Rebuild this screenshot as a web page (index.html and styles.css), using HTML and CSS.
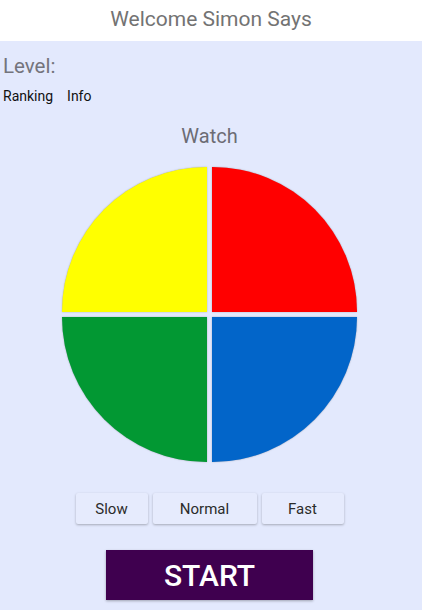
FILE: index.html
```html
<!DOCTYPE html>
<html lang="en">
<head>
<meta charset="utf-8">
<title>Welcome Simon Says</title>
<link rel="stylesheet" href="styles.css">
</head>
<body>
<header class="app-bar">Welcome Simon Says</header>
<main class="screen">
  <div class="level">Level:</div>
  <nav class="links">
    <span class="link">Ranking</span>
    <span class="link">Info</span>
  </nav>
  <div class="stage">
    <div class="status">Watch</div>
    <div class="board">
      <div class="pad pad-yellow"></div>
      <div class="pad pad-red"></div>
      <div class="pad pad-green"></div>
      <div class="pad pad-blue"></div>
    </div>
    <div class="speeds">
      <button class="speed speed-slow">Slow</button>
      <button class="speed speed-normal">Normal</button>
      <button class="speed speed-fast">Fast</button>
    </div>
    <button class="start">START</button>
  </div>
</main>
</body>
</html>
```

FILE: styles.css
```css
html, body {
  margin: 0;
  padding: 0;
}
body {
  width: 422px;
  height: 610px;
  overflow: hidden;
  background: #e3e9fd;
  font-family: Roboto, "Liberation Sans", sans-serif;
}
.app-bar {
  height: 41px;
  box-sizing: border-box;
  background: #ffffff;
  color: #737373;
  font-size: 21px;
  line-height: 39px;
  text-align: center;
  padding-bottom: 2px;
}
.screen {
  display: flex;
  flex-direction: column;
}
.level {
  padding: 13px 3px 0;
  font-size: 20.5px;
  line-height: 24px;
  color: #74747c;
}
.links {
  display: flex;
  gap: 14px;
  padding: 0 3px;
  margin-top: 8px;
  font-size: 14px;
  line-height: 20px;
  color: #111111;
}
.stage {
  display: flex;
  flex-direction: column;
  align-items: center;
  padding-right: 3px;
}
.status {
  margin-top: 18px;
  font-size: 20px;
  line-height: 24px;
  color: #6c6c74;
}
.board {
  margin-top: 19px;
  display: grid;
  grid-template-columns: 144.5px 144.5px;
  grid-template-rows: 144.5px 145px;
  gap: 5.5px;
}
.pad {
  box-shadow: 0 0 1.5px rgba(0, 0, 0, 0.35);
}
.pad-yellow {
  background: #ffff00;
  border-top-left-radius: 100% 100%;
}
.pad-red {
  background: #ff0000;
  border-top-right-radius: 100% 100%;
}
.pad-green {
  background: #029833;
  border-bottom-left-radius: 100% 100%;
}
.pad-blue {
  background: #0265c9;
  border-bottom-right-radius: 100% 100%;
}
.speeds {
  margin-top: 31px;
  display: flex;
  gap: 5px;
}
.speed {
  height: 31px;
  border: none;
  padding: 0;
  background: #e6ebfd;
  color: #2b2b2b;
  font-family: Roboto, "Liberation Sans", sans-serif;
  font-size: 15px;
  box-shadow: 0 1px 2.5px rgba(0, 0, 0, 0.28);
  border-radius: 2px;
}
.speed-slow { width: 72px; }
.speed-normal { width: 104px; }
.speed-fast { width: 82px; }
.start {
  margin-top: 26px;
  width: 207px;
  height: 50px;
  border: none;
  padding: 0;
  background: #3f004f;
  color: #ffffff;
  font-family: Roboto, "Liberation Sans", sans-serif;
  font-size: 30px;
  font-weight: 500;
  box-shadow: 0 1px 2.5px rgba(0, 0, 0, 0.3);
}
```
